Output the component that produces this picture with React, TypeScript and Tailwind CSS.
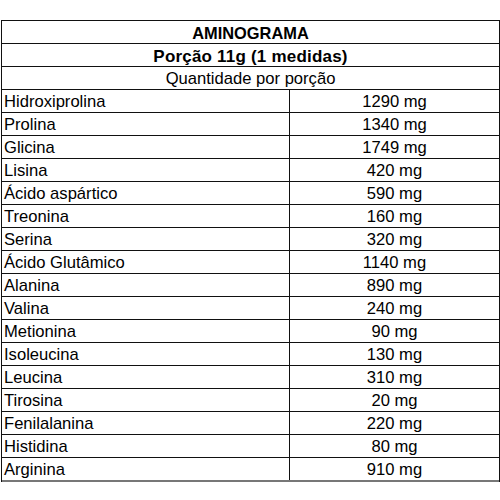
const rows: [string, string][] = [
  ["Hidroxiprolina", "1290 mg"],
  ["Prolina", "1340 mg"],
  ["Glicina", "1749 mg"],
  ["Lisina", "420 mg"],
  ["Ácido aspártico", "590 mg"],
  ["Treonina", "160 mg"],
  ["Serina", "320 mg"],
  ["Ácido Glutâmico", "1140 mg"],
  ["Alanina", "890 mg"],
  ["Valina", "240 mg"],
  ["Metionina", "90 mg"],
  ["Isoleucina", "130 mg"],
  ["Leucina", "310 mg"],
  ["Tirosina", "20 mg"],
  ["Fenilalanina", "220 mg"],
  ["Histidina", "80 mg"],
  ["Arginina", "910 mg"],
];

export default function App() {
  return (
    <div className="h-[500px] w-[500px] bg-white pt-[20px] pl-px font-['Liberation_Sans',Arial,sans-serif] text-[16.6px] text-black">
      <div className="w-[499px] border-x border-t border-[#111]">
        {/* Header */}
        <div className="flex h-[23px] items-center justify-center border-b border-[#111] pt-[2px] text-[16.4px] font-bold leading-none">
          AMINOGRAMA
        </div>
        <div className="flex h-[23px] items-center justify-center border-b border-[#111] pt-[2px] text-[17px] font-bold leading-none tracking-[0.2px]">
          Porção 11g (1 medidas)
        </div>
        <div className="flex h-[23px] items-center justify-center border-b border-[#111] pt-[2px] leading-none">
          Quantidade por porção
        </div>

        {/* Amino acids */}
        {rows.map(([name, value], i) => (
          <div
            key={name}
            className={
              i === rows.length - 1
                ? "flex h-[24px] border-b-2 border-b-[#777] leading-none"
                : "flex h-[23px] border-b border-[#111] leading-none"
            }
          >
            <div className="flex w-[288px] shrink-0 items-center border-r border-[#111] pl-[2px] pt-[2px]">
              {name}
            </div>
            <div className="flex flex-1 items-center justify-center pt-[2px]">{value}</div>
          </div>
        ))}
      </div>
    </div>
  );
}
